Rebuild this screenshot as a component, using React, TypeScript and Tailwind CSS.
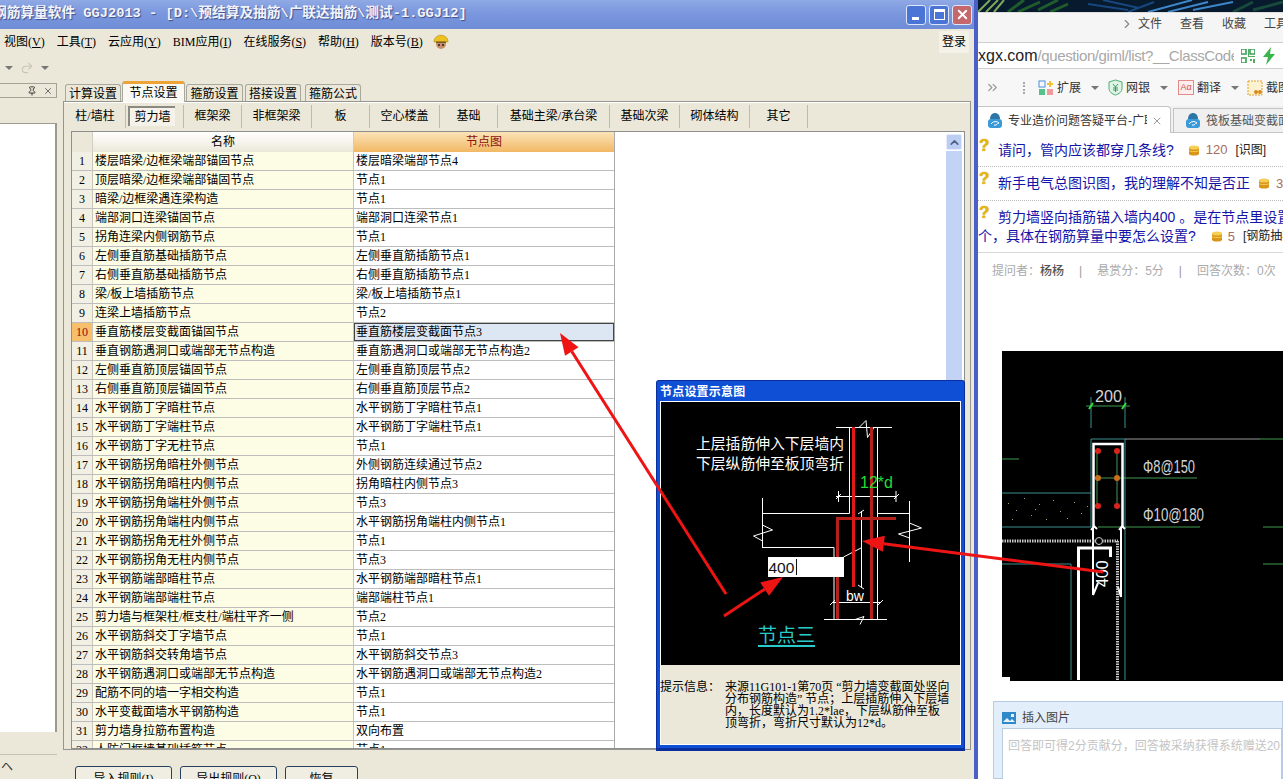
import React from 'react';
import { ChevronRight, ChevronUp, ChevronsRight, Pin, Redo2, X } from 'lucide-react';

const rows: [string, string][] = [
  ['楼层暗梁/边框梁端部锚固节点', '楼层暗梁端部节点4'],
  ['顶层暗梁/边框梁端部锚固节点', '节点1'],
  ['暗梁/边框梁遇连梁构造', '节点1'],
  ['端部洞口连梁锚固节点', '端部洞口连梁节点1'],
  ['拐角连梁内侧钢筋节点', '节点1'],
  ['左侧垂直筋基础插筋节点', '左侧垂直筋插筋节点1'],
  ['右侧垂直筋基础插筋节点', '右侧垂直筋插筋节点1'],
  ['梁/板上墙插筋节点', '梁/板上墙插筋节点1'],
  ['连梁上墙插筋节点', '节点2'],
  ['垂直筋楼层变截面锚固节点', '垂直筋楼层变截面节点3'],
  ['垂直钢筋遇洞口或端部无节点构造', '垂直筋遇洞口或端部无节点构造2'],
  ['左侧垂直筋顶层锚固节点', '左侧垂直筋顶层节点2'],
  ['右侧垂直筋顶层锚固节点', '右侧垂直筋顶层节点2'],
  ['水平钢筋丁字暗柱节点', '水平钢筋丁字暗柱节点1'],
  ['水平钢筋丁字端柱节点', '水平钢筋丁字端柱节点1'],
  ['水平钢筋丁字无柱节点', '节点1'],
  ['水平钢筋拐角暗柱外侧节点', '外侧钢筋连续通过节点2'],
  ['水平钢筋拐角暗柱内侧节点', '拐角暗柱内侧节点3'],
  ['水平钢筋拐角端柱外侧节点', '节点3'],
  ['水平钢筋拐角端柱内侧节点', '水平钢筋拐角端柱内侧节点1'],
  ['水平钢筋拐角无柱外侧节点', '节点1'],
  ['水平钢筋拐角无柱内侧节点', '节点3'],
  ['水平钢筋端部暗柱节点', '水平钢筋端部暗柱节点1'],
  ['水平钢筋端部端柱节点', '端部端柱节点1'],
  ['剪力墙与框架柱/框支柱/端柱平齐一侧', '节点2'],
  ['水平钢筋斜交丁字墙节点', '节点1'],
  ['水平钢筋斜交转角墙节点', '水平钢筋斜交节点3'],
  ['水平钢筋遇洞口或端部无节点构造', '水平钢筋遇洞口或端部无节点构造2'],
  ['配筋不同的墙一字相交构造', '节点1'],
  ['水平变截面墙水平钢筋构造', '节点1'],
  ['剪力墙身拉筋布置构造', '双向布置'],
  ['人防门框墙基础插筋节点', '节点1'],
];

const menus: [string, string][] = [
  ['视图', 'V'],
  ['工具', 'T'],
  ['云应用', 'Y'],
  ['BIM应用', 'I'],
  ['在线服务', 'S'],
  ['帮助', 'H'],
  ['版本号', 'B'],
];

const mainTabs: [string, string][] = [
  ['计算设置', 'w-[56px]'],
  ['节点设置', 'w-[63px]'],
  ['箍筋设置', 'w-[57px]'],
  ['搭接设置', 'w-[56px]'],
  ['箍筋公式', 'w-[56px] ml-[2px]'],
];

const subTabs: [string, string][] = [
  ['柱/墙柱', 'w-[61px]'],
  ['剪力墙', 'w-[58px]'],
  ['框架梁', 'w-[58px]'],
  ['非框架梁', 'w-[70px]'],
  ['板', 'w-[58px]'],
  ['空心楼盖', 'w-[70px]'],
  ['基础', 'w-[58px]'],
  ['基础主梁/承台梁', 'w-[112px]'],
  ['基础次梁', 'w-[70px]'],
  ['砌体结构', 'w-[70px]'],
  ['其它', 'w-[58px]'],
];

const speckles = [
  [1008, 503], [1016, 510], [1024, 498], [1031, 515], [1039, 504], [1046, 519], [1053, 500],
  [1060, 511], [1067, 518], [1074, 502], [1081, 513], [1087, 506], [1012, 519], [1035, 509],
];

const Arrow = ({ x1, y1, x2, y2 }: { x1: number; y1: number; x2: number; y2: number }) => {
  const len = Math.hypot(x2 - x1, y2 - y1);
  const ux = (x2 - x1) / len;
  const uy = (y2 - y1) / len;
  const bx = x2 - ux * 22;
  const by = y2 - uy * 22;
  const points = `${x2},${y2} ${bx - uy * 8},${by + ux * 8} ${bx + uy * 8},${by - ux * 8}`;
  return (
    <g>
      <line x1={x1} y1={y1} x2={bx} y2={by} stroke="#ee1414" strokeWidth="3" />
      <polygon points={points} fill="#ee1414" />
    </g>
  );
};

const Coin = () => (
  <svg width="12" height="11" viewBox="0 0 12 11" className="shrink-0">
    <rect x="1" y="2" width="10" height="7" fill="#d9941a" />
    <ellipse cx="6" cy="8.5" rx="5" ry="2" fill="#d9941a" />
    <ellipse cx="6" cy="2.5" rx="5" ry="2" fill="#f6cf56" />
    <path d="M1 5.5c1 1.5 9 1.5 10 0" stroke="#f6cf56" fill="none" />
  </svg>
);

const TabIcon = () => (
  <svg width="16" height="17" viewBox="0 0 16 17" className="shrink-0">
    <path d="M3 7c0-8 10-8 10 0z" fill="#2d76a8" />
    <rect x="1" y="7" width="14" height="9" rx="3" fill="#3a9ad9" />
    <path d="M4 12c2-3 6-3 8-1-2 0-2 3-5 2" stroke="#fff" fill="none" />
  </svg>
);

const Question = () => (
  <span className="inline-block w-[20px] shrink-0 pl-[1px] -translate-y-[5px] text-[17px] leading-[17px] font-bold text-[#e8b90f] [text-shadow:0_0_1px_#a87f00]">
    ?
  </span>
);

const Caret = () => <span className="shrink-0 w-0 h-0 border-x-[4px] border-x-transparent border-t-[4px] border-t-[#777]" />;

const SimSun = "[font-family:'Liberation_Serif','Noto_Sans_CJK_SC',serif]";

const App: React.FC = () => {
  return (
    <div className={`relative flex w-[1283px] h-[779px] overflow-hidden bg-white text-[12px] text-black ${SimSun}`}>
      {/* 软件主窗口 */}
      <div className="flex flex-col w-[978px] h-full shrink-0 bg-[#ebe8d9] border-r-[4px] border-r-[#4b5fc8]">
        <div className="flex items-center justify-between h-[29px] shrink-0 overflow-hidden bg-[linear-gradient(180deg,#8fa9e4_0%,#7b97de_45%,#6e8dd6_100%)] pr-[2px]">
          <span className="-ml-[7px] whitespace-nowrap text-[13.7px] font-bold text-[#f2f4fa] [text-shadow:1px_1px_1px_#40508e] [font-family:'Liberation_Mono','Noto_Sans_CJK_SC',monospace]">
            钢筋算量软件 GGJ2013 - [D:\预结算及抽筋\广联达抽筋\测试-1.GGJ12]
          </span>
          <div className="flex gap-[3px]">
            <div className="flex items-end w-[20px] h-[20px] pl-[5px] pb-[4px] rounded-[3px] border border-[#dfe6f7] bg-[#4a74d6]">
              <div className="w-[7px] h-[3px] bg-white" />
            </div>
            <div className="flex items-center justify-center w-[20px] h-[20px] rounded-[3px] border border-[#dfe6f7] bg-[#4a74d6]">
              <div className="w-[11px] h-[11px] border border-white border-t-[3px]" />
            </div>
            <div className="flex items-center justify-center w-[20px] h-[20px] rounded-[3px] border border-[#dfe6f7] bg-[#c4686d]">
              <X size={15} strokeWidth={3} color="#fff" />
            </div>
          </div>
        </div>

        <div className="flex items-center h-[26px] shrink-0 pl-[4px]">
          <div className="flex items-center gap-[12px]">
            {menus.map(([name, key]) => (
              <span key={name} className="whitespace-nowrap">
                {name}(<span className="underline">{key}</span>)
              </span>
            ))}
          </div>
          <svg width="16" height="16" viewBox="0 0 16 16" className="ml-[10px]">
            <circle cx="8" cy="10" r="5" fill="#c98f6a" />
            <path d="M1 8c0-9 14-9 14 0z" fill="#eec21e" stroke="#b08a10" strokeWidth="0.6" />
            <circle cx="6" cy="11" r="1" fill="#222" />
            <circle cx="10" cy="11" r="1" fill="#222" />
            <rect x="3" y="7.5" width="10" height="1.5" fill="#7a5a2a" />
          </svg>
          <span className="ml-auto mr-[5px] px-[3px] py-[2px] bg-[#f4f2e8]">登录</span>
        </div>

        <div className="flex items-center h-[26px] shrink-0 pl-[5px] gap-[7px]">
          <Caret />
          <Redo2 size={14} color="#c8c6b8" />
          <Caret />
        </div>

        <div className="flex flex-1 min-h-0">
          {/* 左侧停靠面板 */}
          <div className="flex flex-col w-[57px] shrink-0 mt-[2px]">
            <div className="flex items-center justify-end gap-[6px] h-[15px] pr-[3px] border-y border-r border-[#a5a294]">
              <Pin size={10} color="#222" />
              <X size={10} color="#555" />
            </div>
            <div className="h-[25px]" />
            <div className="h-[609px] bg-white border-t border-r-2 border-[#9a9a90]" />
            <div className="h-[23px] border-b border-[#c6c3b4]" />
            <span className="pl-[1px] pt-[3px] text-[#333]">ヘ</span>
          </div>

          <div className="flex flex-col ml-[6px] w-[908px]">
            <div className="flex items-end h-[21px] pl-[2px] gap-[2px]">
              {mainTabs.map(([tab, width], i) =>
                i === 1 ? (
                  <div key={tab} className={`relative z-10 flex items-center justify-center ${width} h-[21px] -mx-[1px] rounded-t-[3px] bg-[#f9f8f3] border-x border-[#a9a89c] border-t-[3px] border-t-[#eca436]`}>
                    {tab}
                  </div>
                ) : (
                  <div key={tab} className={`flex items-center justify-center ${width} h-[18px] rounded-t-[3px] border-x border-t border-[#a9a89c] bg-[#ebe8d9]`}>
                    {tab}
                  </div>
                ),
              )}
            </div>

            <div className="flex flex-col h-[655px] -mt-[1px] border border-[#93958e] shadow-[inset_0_1px_0_#fff]">
              <div className="flex items-center h-[26px] pl-[1px] pt-[2px] shrink-0">
                {subTabs.map(([tab, width], i) => (
                  <div key={tab} className={`flex items-center justify-center h-[23px] ${width} border-r border-[#bdbbab]`}>
                    {i === 1 ? (
                      <span className="flex items-center justify-center w-[47px] h-[20px] -ml-[6px] bg-[#f4f2e9] border-l-2 border-t-2 border-[#8a8a80]">{tab}</span>
                    ) : (
                      tab
                    )}
                  </div>
                ))}
              </div>

              {/* 节点表格 */}
              <div className="flex ml-[7px] mt-[3px] w-[894px] h-[618px] overflow-hidden border border-[#8e8e8e] bg-white">
                <div className="w-[543px] shrink-0 border-r border-[#aaa]">
                  <div className="flex h-[20px] text-center leading-[20px]">
                    <div className="w-[21px] border-r border-[#d0cec2] bg-[#ebe8d9]" />
                    <div className="w-[261px] border-r border-[#d0cec2] bg-[linear-gradient(180deg,#fff,#ebe8d9)]">名称</div>
                    <div className="flex-1 bg-[linear-gradient(180deg,#fbe3b8,#f2b864)] text-[#8c1010]">节点图</div>
                  </div>
                  {rows.map(([name, value], i) => (
                    <div key={name} className="flex h-[19px] leading-[18px] border-b border-[#bdbdbd]">
                      <div className={`w-[21px] shrink-0 text-center border-r border-[#c8c6ba] ${i === 9 ? 'bg-[#f7be6c] text-[#8c1010]' : 'bg-[#f2f0e5]'}`}>{i + 1}</div>
                      <div className="w-[261px] shrink-0 pl-[2px] whitespace-nowrap border-r border-[#c8c6ba] bg-[#fdfce4]">{name}</div>
                      <div className={`flex-1 pl-[2px] whitespace-nowrap ${i === 9 ? 'bg-[#dde7f4] outline outline-1 -outline-offset-1 outline-[#444]' : ''}`}>{value}</div>
                    </div>
                  ))}
                </div>
                <div className="flex-1" />
                <div className="flex flex-col w-[16px] mr-[2px] mt-[2px] shrink-0">
                  <div className="flex items-center justify-center h-[16px] rounded-[2px] bg-[#bccdf3] border border-[#e4ebfb]">
                    <ChevronUp size={13} strokeWidth={3} color="#4d6185" />
                  </div>
                  <div className="flex-1 mt-[1px] bg-[#c3d3f6]" />
                </div>
              </div>
            </div>

            <div className="flex gap-[8px] ml-[12px] mt-[16px]">
              {['导入规则(I)', '导出规则(O)', '恢复'].map((label, i) => (
                <div key={label} className={`flex justify-center pt-[3px] h-[24px] rounded-[3px] border border-[#24405e] bg-[#f0eee2] ${i === 2 ? 'w-[73px]' : 'w-[97px]'}`}>
                  {label}
                </div>
              ))}
            </div>
          </div>
        </div>
      </div>

      {/* 右侧浏览器窗口 */}
      <div className="flex flex-col flex-1 min-w-0 overflow-hidden bg-white text-[12px] [font-family:'Liberation_Sans','Noto_Sans_CJK_SC',sans-serif]">
        {/* 桌面壁纸 */}
        <svg width="305" height="12" viewBox="0 0 305 12" className="shrink-0 bg-[#071a2e]">
          <path d="M0 12 12 0M8 12 20 0M16 12 26 0" stroke="#7fa85a" strokeWidth="2" />
          <path d="M30 12 46 0M40 12 62 2M60 10 80 0M72 12 90 4" stroke="#1f5c2c" strokeWidth="3" />
          <path d="M110 4l40 6M125 0l36 8M150 12l26-10" stroke="#17477e" strokeWidth="2" />
          <path d="M170 12 214 0M190 12l40-10M215 10l40-8" stroke="#3f86c8" strokeWidth="2" />
          <path d="M255 12l20-10M275 10l30-8" stroke="#174a3a" strokeWidth="3" />
        </svg>
        <div className="flex items-center h-[30px] shrink-0 pb-[7px] pl-[142px] bg-[#f5f5f5] border-t border-[#ddd] text-[#444] whitespace-nowrap">
          <ChevronRight size={14} color="#888" className="shrink-0" />
          <span className="ml-[4px] shrink-0">文件</span>
          <span className="ml-[18px] shrink-0">查看</span>
          <span className="ml-[18px] shrink-0">收藏</span>
          <span className="ml-[18px] shrink-0">工具</span>
        </div>

        <div className="flex items-center h-[27px] shrink-0 border-y border-[#cfcfcf] text-[16px] whitespace-nowrap">
          <span className="w-[256px] shrink-0 overflow-hidden">
            <span className="text-[#222]">xgx.com</span>
            <span className="text-[15px] tracking-[-0.4px] text-[#a8a8a8]">/question/giml/list?__ClassCode</span>
          </span>
          <svg width="14" height="14" viewBox="0 0 14 14" className="ml-[7px] shrink-0">
            <path d="M0 0h5v5H0zM9 0h5v5H9zM0 9h5v5H0z" fill="none" stroke="#3aa055" strokeWidth="1.6" />
            <path d="M7 0h1v7h6v1H7zM9 10h2v2H9zM12 10h2v4h-2z" fill="#4fae62" />
          </svg>
          <svg width="14" height="18" viewBox="0 0 14 18" className="ml-[7px] shrink-0">
            <path d="M9 0 1 10h5l-2 8 9-11H8z" fill="#38b54a" />
          </svg>
        </div>

        <div className="flex items-center h-[37px] shrink-0 pl-[7px] bg-[#f7f7f7] text-[#333] whitespace-nowrap">
          <ChevronsRight size={15} color="#999" className="shrink-0" />
          <span className="ml-[23px] w-[2px] h-[12px] shrink-0 border-l-2 border-dotted border-[#aaa]" />
          <svg width="16" height="16" viewBox="0 0 16 16" className="ml-[13px] shrink-0">
            <rect x="1" y="1" width="6" height="6" fill="none" stroke="#4a90d9" />
            <rect x="1" y="9" width="6" height="6" fill="#58c08a" />
            <rect x="9" y="9" width="6" height="6" fill="#f09a9a" />
            <path d="M12 1v6M9 4h6" stroke="#edc23a" strokeWidth="2" />
          </svg>
          <span className="ml-[3px] shrink-0">扩展</span>
          <span className="ml-[10px] flex shrink-0"><Caret /></span>
          <svg width="15" height="17" viewBox="0 0 15 17" className="ml-[9px] shrink-0">
            <path d="M7.5 1 14 3v6c0 4-3 6-6.500 7C4 15 1 13 1 9V3z" fill="#dff3e6" stroke="#4cae72" />
            <path d="M5 5l2.500 3L10 5M5 9h5M5 11h5M7.500 8v5" stroke="#3a9a60" fill="none" />
          </svg>
          <span className="ml-[3px] shrink-0">网银</span>
          <span className="ml-[10px] flex shrink-0"><Caret /></span>
          <span className="ml-[10px] flex items-center justify-center w-[16px] h-[15px] shrink-0 border border-[#e28a8a] bg-[#fdeeee] text-[9px] text-[#d25050]">Aα</span>
          <span className="ml-[3px] shrink-0">翻译</span>
          <span className="ml-[10px] flex shrink-0"><Caret /></span>
          <svg width="16" height="16" viewBox="0 0 16 16" className="ml-[8px] shrink-0">
            <rect x="1" y="1" width="14" height="14" fill="#fdf2d0" stroke="#e0a030" strokeDasharray="2 1" />
            <circle cx="9" cy="12" r="2" fill="#d88a20" />
            <circle cx="13" cy="12" r="2" fill="#d88a20" />
          </svg>
          <span className="ml-[3px] shrink-0">截图</span>
        </div>

        <div className="flex items-end h-[27px] shrink-0 bg-[#f0f0f0] border-b border-[#c4c4c4] whitespace-nowrap">
          <div className="flex items-center w-[193px] h-[27px] pl-[9px] pt-[1px] -mb-[1px] shrink-0 bg-white border-r border-t border-[#c4c4c4] rounded-tr-[4px]">
            <TabIcon />
            <span className="ml-[5px] w-[139px] shrink-0 overflow-hidden text-[#333]">专业造价问题答疑平台-广联</span>
            <X size={12} color="#999" className="ml-[4px] shrink-0" />
          </div>
          <div className="flex items-center h-[24px] ml-[2px] pl-[11px] flex-1 border-l border-t border-[#c4c4c4] overflow-hidden">
            <TabIcon />
            <span className="ml-[5px] shrink-0 text-[#555]">筏板基础变截面钢筋</span>
          </div>
        </div>

        {/* 问题列表 */}
        <div className="flex items-center h-[34px] shrink-0 pt-[1px] border-b border-dotted border-[#bbb] whitespace-nowrap">
          <Question />
          <span className="shrink-0 text-[14px] text-[#1414a8]">请问，管内应该都穿几条线?</span>
          <span className="ml-[14px] shrink-0"><Coin /></span>
          <span className="ml-[6px] shrink-0 text-[13px] text-[#a96b5e]">120</span>
          <span className="ml-[8px] shrink-0 text-[#222]">[识图]</span>
        </div>
        <div className="flex items-center h-[34px] shrink-0 border-b border-dotted border-[#bbb] whitespace-nowrap">
          <Question />
          <span className="shrink-0 text-[14px] text-[#1414a8]">新手电气总图识图，我的理解不知是否正</span>
          <span className="ml-[8px] shrink-0"><Coin /></span>
          <span className="ml-[6px] shrink-0 text-[13px] text-[#a96b5e]">30</span>
        </div>
        <div className="h-[52px] shrink-0 pt-[7px] border-b border-[#d8d8d8] whitespace-nowrap leading-[19px]">
          <div className="flex items-center">
            <Question />
            <span className="shrink-0 text-[14px] text-[#1414a8]">剪力墙竖向插筋锚入墙内400 。是在节点里设置</span>
          </div>
          <div className="flex items-center">
            <span className="shrink-0 text-[14px] text-[#1414a8]">个，具体在钢筋算量中要怎么设置?</span>
            <span className="ml-[15px] shrink-0"><Coin /></span>
            <span className="ml-[5px] shrink-0 text-[13px] text-[#a96b5e]">5</span>
            <span className="ml-[8px] shrink-0 text-[#222]">[钢筋抽样]</span>
          </div>
        </div>
        <div className="flex items-center h-[35px] shrink-0 pl-[14px] text-[#aaa] whitespace-nowrap">
          提问者：<span className="text-[#555] font-medium">杨杨</span>
          <span className="mx-[15px] text-[#999]">|</span>悬赏分：5分
          <span className="mx-[15px] text-[#999]">|</span>回答次数：0次
        </div>

        {/* CAD 截图 */}
        <div className="ml-[24px] mt-[63px] h-[330px] shrink-0 bg-black">
          <svg viewBox="1002 351 281 330" width="281" height="330" fill="none">
            <g stroke="#3c8f90" strokeWidth="1">
              <path d="M1091 397v31M1125 397v31M1091 439h34M1091 439v88M1125 439v241M1002 493h89M1002 527h89M1002 564h69v116" />
            </g>
            <path d="M1125 439h135" stroke="#9a9a9a" />
            <path d="M1260 439h23M1002 459h17M1097 478h100M1098 527h22M1125 527h75M1263 527h20M1263 564h20M1086 406h44" stroke="#3f9a50" />
            <path d="M1089 409l4-6M1122 409l4-6" stroke="#33e040" strokeWidth="2" />
            <path d="M1097 450v57M1117 450v57" stroke="#3f9a50" />
            <path d="M1093.500 528v-84h29v84" stroke="#fff" strokeWidth="2.500" />
            <path d="M1093 527v68M1121 527v70" stroke="#fff" strokeWidth="2" />
            <path d="M1091 530l3-4 3 3M1119 530l3-4 3 3M1093 595l5-12M1121 597l-3-10" stroke="#fff" strokeWidth="2" />
            <circle cx="1098" cy="451" r="3" fill="#d8261c" />
            <circle cx="1117" cy="451" r="3" fill="#d8261c" />
            <circle cx="1098" cy="478" r="3" fill="#c8701c" />
            <circle cx="1117" cy="478" r="3" fill="#c8701c" />
            <circle cx="1098" cy="506" r="3" fill="#d8261c" />
            <circle cx="1117" cy="506" r="3" fill="#d8261c" />
            {speckles.map(([x, y]) => (
              <rect key={`${x}-${y}`} x={x} y={y} width="1" height="1" fill="#a89a70" />
            ))}
            <path d="M1002 541h116M1117.500 541v139" stroke="#c8c8c8" strokeWidth="3" strokeDasharray="1.500 1" />
            <circle cx="1099" cy="541" r="3.500" fill="#000" stroke="#ccc" />
            <path d="M1078.500 680V548h32v9" stroke="#fff" strokeWidth="3" />
            <rect x="1002" y="677" width="8" height="4" fill="#fff" />
            <g fill="#d4d4d4" className="[font-family:'Liberation_Sans',sans-serif]">
              <text x="1095" y="402" fontSize="17" textLength="27" lengthAdjust="spacingAndGlyphs">200</text>
              <text x="1143" y="473" fontSize="19" textLength="52" lengthAdjust="spacingAndGlyphs">Φ8@150</text>
              <text x="1143" y="521" fontSize="19" textLength="61" lengthAdjust="spacingAndGlyphs">Φ10@180</text>
              <text x="1108" y="587" fontSize="16" fill="#fff" transform="rotate(-90 1108 587)">400</text>
            </g>
          </svg>
        </div>

        {/* 回答框 */}
        <div className="ml-[15px] mt-[20px] flex-1 min-h-0 pl-[8px] bg-[#e2eefa] border border-[#b7cbe2]">
          <div className="flex items-center h-[26px] pt-[5px] gap-[6px] text-[#444]">
            <svg width="14" height="12" viewBox="0 0 14 12" className="shrink-0">
              <rect width="14" height="12" fill="#2f88c8" />
              <path d="M1 10l4-4 3 3 2-2 3 3z" fill="#e9f4fc" />
              <rect x="9" y="2" width="3" height="3" fill="#e9f4fc" />
            </svg>
            插入图片
          </div>
          <div className="h-[60px] pl-[5px] pt-[8px] bg-white border border-[#b7cbe2] text-[#c4c4c4] whitespace-nowrap overflow-hidden">
            回答即可得2分贡献分，回答被采纳获得系统赠送20分
          </div>
        </div>
      </div>

      {/* 节点设置示意图 */}
      <div className="absolute left-[656px] top-[380px] flex flex-col w-[309px] h-[371px] px-[3px] pb-[3px] bg-[#0e4fd6] border border-[#0a2f9c] border-b-[3px] border-b-[#0a2f9c] rounded-t-[3px]">
        <div className="flex items-center h-[21px] shrink-0 -mb-[1px] pt-[1px] text-[12px] font-bold text-white tracking-[0.2px]">节点设置示意图</div>
        <div className="flex flex-col flex-1 bg-[#ebe8d9] border border-white">
          <div className="h-[263px] shrink-0 bg-black">
            <svg viewBox="661 402 299 263" width="299" height="263" fill="none">
              <g stroke="#fff" strokeWidth="1">
                <path d="M836 427.500h56M859 427.500l7-7 1.500 17 6.500-10" />
                <path d="M849.500 427v86.500H762.500M877.500 427v192M877.500 513.500h32" />
                <path d="M762.500 498v50M762.500 525l10 5-19 6 9 5" />
                <path d="M909.500 501v61M909.500 523l12 5-23 6 11 4" />
                <path d="M762.500 547.500H834v72" />
                <path d="M824 619.500h63M855 619.500l9-3-4 8" />
                <path d="M836 496.500h61M836 499l5-5M894 499l5-5M838.500 491v11M896 491v11" />
                <path d="M832 602.500h49M830 605l5-5M878 605l5-5" />
                <path d="M861.500 511v77M858 514l6-4M858 585l6 4" />
                <path d="M843.500 557l17.500-9" />
              </g>
              <path d="M871.500 427v192M837.500 619V518.500h58.500" stroke="#b4201c" strokeWidth="3" />
              <path d="M853.500 427v160" stroke="#e01818" strokeWidth="3" />
              <g className="[font-family:'Noto_Sans_CJK_SC',sans-serif]" fill="#fff" fontSize="14.800">
                <text x="696" y="449">上层插筋伸入下层墙内</text>
                <text x="696" y="469">下层纵筋伸至板顶弯折</text>
              </g>
              <text x="860" y="488" fontSize="16" fill="#22dd33" className="[font-family:'Liberation_Sans',sans-serif]">12*d</text>
              <text x="846" y="601" fontSize="14" fill="#fff" className="[font-family:'Liberation_Sans',sans-serif]">bw</text>
              <rect x="768" y="557" width="76" height="20" fill="#fff" />
              <text x="768.500" y="573" fontSize="15.500" fill="#111" className="[font-family:'Liberation_Sans',sans-serif]">400</text>
              <path d="M796.500 559v16" stroke="#111" />
              <text x="758" y="642" fontSize="19" fill="#2bcaca" className="[font-family:'Noto_Sans_CJK_SC',sans-serif]">节点三</text>
              <path d="M758 646h57" stroke="#2bcaca" strokeWidth="2" />
            </svg>
          </div>
          <div className="flex mt-[16px] -ml-[1px] leading-[12px] whitespace-nowrap">
            <span className="w-[65px] shrink-0">提示信息：</span>
            <div>
              <div>来源11G101-1第70页 “剪力墙变截面处竖向</div>
              <div>分布钢筋构造” 节点；上层插筋伸入下层墙</div>
              <div>内，长度默认为1.2*lae，下层纵筋伸至板</div>
              <div>顶弯折，弯折尺寸默认为12*d。</div>
            </div>
          </div>
        </div>
      </div>

      {/* 红色标注箭头 */}
      <svg className="absolute inset-0 pointer-events-none" width="1283" height="779">
        <Arrow x1={726} y1={594} x2={560} y2={333} />
        <Arrow x1={724} y1={616} x2={783} y2={577} />
        <Arrow x1={1103} y1={572} x2={862} y2={541} />
      </svg>
    </div>
  );
};

export default App;
